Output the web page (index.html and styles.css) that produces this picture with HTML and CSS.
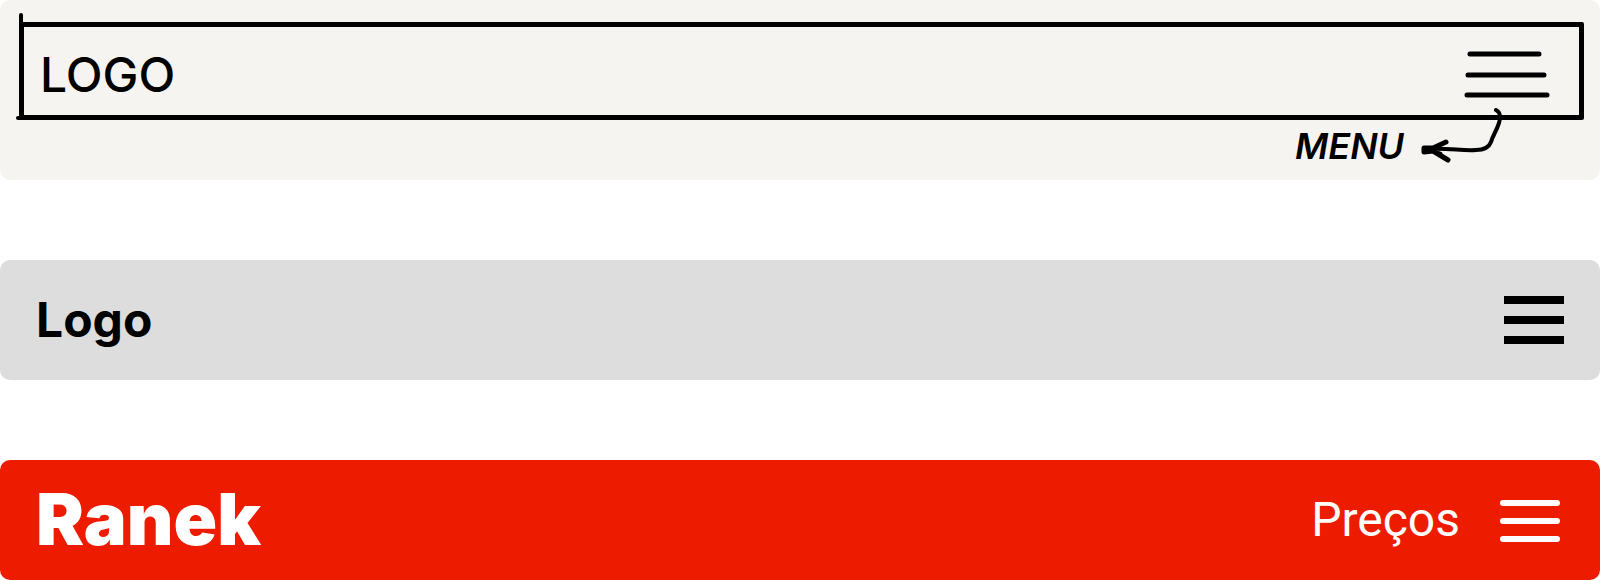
FILE: index.html
```html
<!DOCTYPE html>
<html lang="pt">
<head>
<meta charset="utf-8">
<title>Ranek</title>
<link rel="stylesheet" href="styles.css">
</head>
<body>
<main class="stages">
  <section class="sketch">
    <div class="sketch-frame">
      <span class="sketch-logo">LOGO</span>
      <svg class="sketch-lines" width="88" height="60" viewBox="0 0 88 60" aria-hidden="true">
        <path d="M7 13H76M5 34H81M4 54H84"/>
      </svg>
    </div>
    <div class="sketch-note">
      <span class="sketch-menu">MENU</span>
      <svg class="sketch-arrow" width="84" height="60" viewBox="0 0 84 60" aria-hidden="true">
        <path d="M76 6Q82 9 79 19C76 28 73 31 71 38Q68 46 56 46C42 47 30 44 8 45"/>
        <path class="arrow-head" d="M26 38L13 44L4 44V48L13 47L28 56M5 46L17 43M9 46L20 50"/>
      </svg>
    </div>
  </section>
  <header class="bar bar-wire">
    <a class="wire-logo" href="#">Logo</a>
    <button class="menu-button" type="button" aria-label="Menu">
      <svg width="60" height="48" viewBox="0 0 60 48"><path d="M0 0H60V8H0ZM0 20H60V28H0ZM0 40H60V48H0Z"/></svg>
    </button>
  </header>
  <header class="bar bar-brand">
    <a class="brand-logo" href="#">Ranek</a>
    <nav class="brand-nav">
      <a class="brand-link" href="#">Preços</a>
      <button class="menu-button" type="button" aria-label="Menu">
        <svg width="60" height="44" viewBox="0 0 60 44"><rect y="2" width="60" height="6" rx="3"/><rect y="20" width="60" height="6" rx="3"/><rect y="38" width="60" height="6" rx="3"/></svg>
      </button>
    </nav>
  </header>
</main>
</body>
</html>
```
FILE: styles.css
```css
* { box-sizing: border-box; }
body { margin: 0; background: #fff; color: #000; font-family: Inter, sans-serif; }
a { color: inherit; text-decoration: none; }
svg { display: block; }
.stages { display: flex; flex-direction: column; gap: 80px; }

.sketch { position: relative; padding: 22px 16px 60px 19px; border-radius: 10px; background: #f5f4f0; }
.sketch-frame {
  position: relative;
  display: flex;
  align-items: center;
  justify-content: space-between;
  padding: 0 28px 0 16px;
  min-height: 98px;
  border: 5px solid #000;
  border-radius: 2px;
}
.sketch-frame::before,
.sketch-frame::after { content: ""; position: absolute; background: #000; border-radius: 2px; }
.sketch-frame::before { left: -5px; top: -14px; width: 4px; height: 14px; }
.sketch-frame::after { left: -8px; bottom: -5px; width: 8px; height: 4px; }
.sketch-logo { padding-top: 8px; font-size: 48px; line-height: 56px; font-weight: 500; }
.sketch-lines, .sketch-arrow { fill: none; stroke: #000; stroke-width: 4; stroke-linecap: round; stroke-linejoin: round; }
.sketch-lines { stroke-width: 5; }
.sketch-note { position: absolute; right: 96px; top: 104px; display: flex; align-items: flex-end; gap: 16px; }
.sketch-menu { font-size: 36px; line-height: 36px; font-style: italic; font-weight: 600; }
.arrow-head { stroke-width: 5; }

.bar { display: flex; align-items: center; justify-content: space-between; min-height: 120px; border-radius: 10px; }
.bar-wire { padding: 0 36px; background: #ddd; }
.bar-brand { padding: 0 40px 0 36px; background: #ed1c00; color: #fff; }
.wire-logo { font-size: 48px; line-height: 60px; font-weight: 700; }
.brand-logo { padding-bottom: 2px; font-size: 72px; line-height: 88px; font-weight: 900; }
.brand-nav { display: flex; align-items: center; gap: 40px; }
.brand-link { font-family: Roboto, sans-serif; font-size: 48px; line-height: 60px; }
.menu-button { padding: 0; border: 0; background: none; color: inherit; cursor: pointer; }
.menu-button svg { fill: currentColor; }
```
